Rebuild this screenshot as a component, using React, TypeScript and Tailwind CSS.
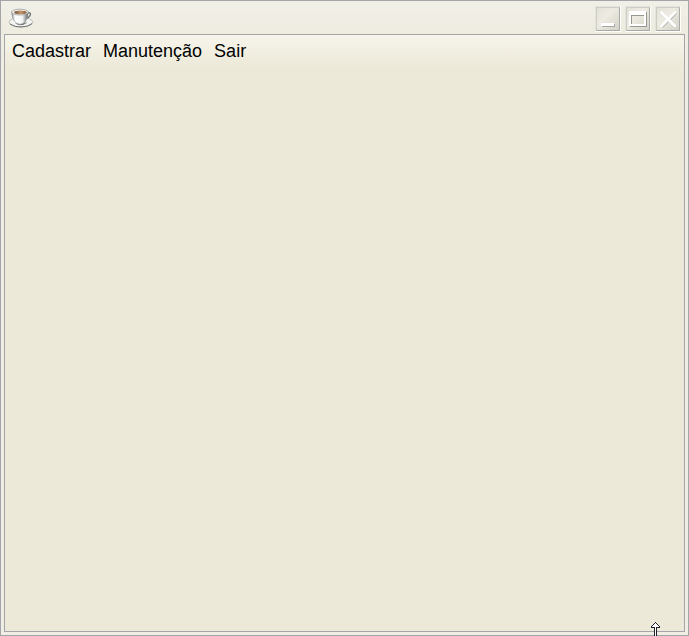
import type { ReactNode } from "react";

const menus = ["Cadastrar", "Manutenção", "Sair"];

function CoffeeIcon() {
  return (
    <svg width="26" height="22" viewBox="0 0 26 22" aria-hidden="true">
      <defs>
        <linearGradient id="cup" x1="0" x2="1">
          <stop offset="0" stopColor="#8d9192" />
          <stop offset=".22" stopColor="#ffffff" />
          <stop offset=".65" stopColor="#f2f3f3" />
          <stop offset="1" stopColor="#5b6062" />
        </linearGradient>
        <linearGradient id="coffee" x1="0" x2="1">
          <stop offset="0" stopColor="#75583f" />
          <stop offset=".55" stopColor="#c4976b" />
          <stop offset="1" stopColor="#805332" />
        </linearGradient>
      </defs>
      <ellipse cx="13" cy="14.2" rx="11.8" ry="4.7" fill="#f4f4f1" stroke="#a9acaa" strokeWidth=".7" />
      <path d="M2 16Q7 19.3 13 19Q20 19 24 15.6" fill="none" stroke="#6d7273" strokeWidth="1" />
      <path d="M7 15.2Q13 19.5 19.5 14.5Z" fill="#787d7e" />
      <path d="M18.6 5.2q4.4-1.4 3.8 1.5q-.7 2.9-5 3.7" fill="none" stroke="#6f7576" strokeWidth="1.4" />
      <path d="M3.6 4Q4 11.5 8 15Q12.5 17.6 16.5 14.8Q20 11 20.2 4Z" fill="url(#cup)" stroke="#818687" strokeWidth=".5" />
      <ellipse cx="12" cy="4.1" rx="8.4" ry="2.9" fill="#f8f8f6" stroke="#8f9493" strokeWidth=".7" />
      <ellipse cx="12.4" cy="4.4" rx="6.3" ry="1.9" fill="url(#coffee)" />
    </svg>
  );
}

function WindowButton({ label, children }: { label: string; children: ReactNode }) {
  return (
    <button aria-label={label} className="h-[26px] w-[26px] border border-t-[#e5e4dc] border-l-[#e5e4dc] border-r-[#fffef8] border-b-[#fffef8]">
      <span className="block h-6 w-6 border border-t-[#cccdc4] border-l-[#cccdc4] border-r-[#a9aaa5] border-b-[#a9aaa5] bg-linear-to-br from-[#e2e1d8] via-[#edebe2] via-40% to-[#d3d2c8]">
        <svg width="22" height="22" viewBox="0 0 22 22" shapeRendering="crispEdges">{children}</svg>
      </span>
    </button>
  );
}

export default function App() {
  return (
    <div className="flex h-[636px] w-[689px] flex-col overflow-hidden border border-[#a4a5a8] bg-[#f0eee4] px-[3px] pb-[3px] font-['Liberation_Sans',Arial,sans-serif]">
      <header className="-mx-[3px] flex h-[33px] shrink-0 items-start justify-between bg-linear-to-b from-[#f1f0e8] to-[#eeebdf] pt-[5px] pr-[7px] pl-[7px]">
        <div className="pt-[2px]"><CoffeeIcon /></div>
        <div className="flex gap-1">
          <WindowButton label="Minimizar">
            <path d="M5 16h13v3H5z" fill="#a7a89f" />
            <path d="M4 15h13v3H4z" fill="#fff" />
          </WindowButton>
          <WindowButton label="Maximizar">
            <path d="M3 4h17v15H3zM5 8v8h13V8z" fill="#96978f" fillRule="evenodd" />
            <path d="M2 3h17v15H2zM4 7v9h13V7z" fill="#fff" fillRule="evenodd" />
            <path d="M4 7h13v1H5v8H4z" fill="#96978f" />
          </WindowButton>
          <WindowButton label="Fechar">
            <path d="M5 5l14 14M19 5L5 19" stroke="#aaaca3" strokeWidth="2.4" shapeRendering="auto" />
            <path d="M4.5 4.5l13.5 13.5M18 4.5L4.5 18" stroke="#fff" strokeWidth="2.8" strokeLinecap="round" shapeRendering="auto" />
          </WindowButton>
        </div>
      </header>
      <main className="min-h-0 flex-1 border border-[#a4a5a8] bg-[#ece9d8]">
        <nav className="flex h-[33px] items-start gap-3 bg-linear-to-b from-[#f7f5eb] to-[#ece9d8] pt-[6px] pl-[7px] text-[18px] leading-[21px] text-black">
          {menus.map((menu) => <span key={menu}>{menu}</span>)}
        </nav>
      </main>
      <svg className="absolute top-[622px] left-[651px]" width="9" height="14" viewBox="0 0 9 14" shapeRendering="crispEdges" aria-hidden="true">
        <path d="M4 0h1v1h1v1h1v1h1v1h1v2H6v8H3V6H0V4h1V3h1V2h1V1h1z" fill="#20212c" />
        <path d="M4 1h1v1h1v1h1v1h1v1H5v9H4V5H1V4h1V3h1V2h1z" fill="#fff" />
      </svg>
    </div>
  );
}
